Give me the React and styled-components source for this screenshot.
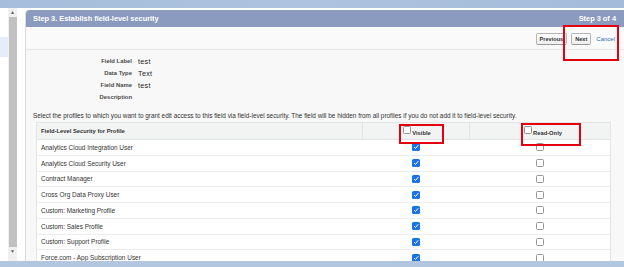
import React from "react";
import styled, { createGlobalStyle } from "styled-components";

const GlobalStyle = createGlobalStyle`
  html, body {
    margin: 0;
    padding: 0;
    background: #ffffff;
    font-family: "Liberation Sans", Arial, sans-serif;
    overflow: hidden;
  }
`;

const profiles = [
  "Analytics Cloud Integration User",
  "Analytics Cloud Security User",
  "Contract Manager",
  "Cross Org Data Proxy User",
  "Custom: Marketing Profile",
  "Custom: Sales Profile",
  "Custom: Support Profile",
  "Force.com - App Subscription User",
];

const fields = [
  ["Field Label", "test"],
  ["Data Type", "Text"],
  ["Field Name", "test"],
  ["Description", ""],
];

const StyledPage = styled.div`
  width: 624px;
  height: 267px;
  display: flex;
  flex-direction: column;
  overflow: hidden;
  position: relative;
`;

const StyledBanner = styled.div`
  height: 8px;
  flex-shrink: 0;
  background: linear-gradient(90deg, #a6bedb 0%, #adc3df 50%, #a4bcda 100%);
`;

const StyledMiddle = styled.div`
  flex: 1;
  display: flex;
  min-height: 0;
`;

const StyledSidebar = styled.div`
  width: 8px;
  flex-shrink: 0;
  padding-top: 29px;
  .active {
    height: 20px;
    background: #e5edf8;
  }
`;

const StyledScrollbar = styled.div`
  width: 9px;
  flex-shrink: 0;
  background: #f0f0f0;
  display: flex;
  flex-direction: column;
  align-items: center;
  .arrow {
    height: 9px;
    font-size: 5px;
    line-height: 9px;
    color: #606060;
  }
  .thumb {
    flex: 1;
    width: 8px;
    background: #c1c1c1;
  }
`;

const StyledPanel = styled.div`
  flex: 1;
  margin: 2px 0 0 8px;
  border-left: 1px solid #d9dcde;
  border-top-left-radius: 4px;
  background: #f8f8f8;
  display: flex;
  flex-direction: column;
  min-width: 0;
  overflow: hidden;
`;

const StyledHeader = styled.div`
  height: 17px;
  flex-shrink: 0;
  background: #8a9bbf;
  border-top-left-radius: 3px;
  display: flex;
  align-items: center;
  justify-content: space-between;
  padding: 0 8px 0 7px;
  color: #ffffff;
  font-weight: bold;
  font-size: 7.4px;
`;

const StyledButtonBar = styled.div`
  height: 22px;
  flex-shrink: 0;
  background: #fafafa;
  border-bottom: 1px solid #e6e6e6;
  display: flex;
  align-items: center;
  justify-content: flex-end;
  gap: 4px;
  padding-right: 9px;
`;

const StyledButton = styled.button`
  height: 12px;
  padding: 0 3px;
  font-family: "Liberation Sans", Arial, sans-serif;
  font-size: 5.6px;
  font-weight: bold;
  color: #333333;
  background: linear-gradient(#ffffff, #eeeeee);
  border: 1px solid #b5b5b5;
  border-bottom-color: #9a9a9a;
  border-radius: 2px;
  margin-top: 2px;
`;

const StyledLink = styled.span`
  font-size: 6px;
  color: #2b6fba;
  margin-left: 1px;
  margin-top: 2px;
`;

const StyledFieldList = styled.div`
  padding-top: 5px;
  display: flex;
  flex-direction: column;
`;

const StyledFieldRow = styled.div`
  height: 12px;
  display: flex;
  align-items: center;
  gap: 6px;
  .label {
    width: 106px;
    text-align: right;
    font-size: 5.9px;
    font-weight: bold;
    color: #4a4a4a;
  }
  .value {
    font-size: 7.2px;
    color: #222222;
    letter-spacing: 0.3px;
  }
`;

const StyledIntro = styled.div`
  margin-top: 7px;
  height: 12px;
  line-height: 12px;
  padding-left: 7px;
  font-size: 6.4px;
  color: #333333;
  white-space: nowrap;
`;

const StyledTable = styled.div`
  margin: 0 13px 0 10px;
  background: #ffffff;
  border: 1px solid #e3e5e6;
  border-bottom: none;
  display: grid;
  grid-template-columns: 325px 107px 1fr;
`;

const StyledHeadCell = styled.div`
  height: 17px;
  background: #f2f3f3;
  border-bottom: 1px solid #e0e3e5;
  border-left: ${(p) => (p.$first ? "none" : "1px solid #e0e3e5")};
  display: flex;
  align-items: center;
  justify-content: ${(p) => (p.$first ? "flex-start" : "center")};
  padding-left: ${(p) => (p.$first ? "4px" : "0")};
  font-size: 5.8px;
  font-weight: bold;
  color: #333333;
  box-sizing: border-box;
`;

const StyledCell = styled.div`
  height: 15.75px;
  border-bottom: 1px solid #ededed;
  box-sizing: border-box;
  display: flex;
  align-items: center;
  justify-content: ${(p) => (p.$first ? "flex-start" : "center")};
  padding-left: ${(p) => (p.$first ? "4px" : "0")};
  font-size: 6.45px;
  color: #333333;
`;

const StyledBox = styled.span`
  width: 8px;
  height: 8px;
  box-sizing: border-box;
  border-radius: 1.5px;
  display: inline-flex;
  align-items: center;
  justify-content: center;
  background: ${(p) => (p.$checked ? "#1a73e8" : "#ffffff")};
  border: ${(p) => (p.$checked ? "none" : "1px solid #959595")};
  margin-right: ${(p) => (p.$gap ? "1px" : "0")};
  margin-bottom: ${(p) => (p.$gap ? "2px" : "0")};
`;

const StyledHeadLabel = styled.span`
  display: inline-flex;
  align-items: flex-end;
  padding-left: ${(p) => p.$shift || "0"};
`;

const StyledMark = styled.div`
  position: absolute;
  border: 2px solid #e3000f;
  box-sizing: border-box;
  pointer-events: none;
`;

const StyledFooter = styled.div`
  height: 6px;
  flex-shrink: 0;
  background: #b3c6df;
`;

const Box = ({ checked, gap }) => (
  <StyledBox $checked={checked} $gap={gap}>
    {checked && (
      <svg width="6" height="6" viewBox="0 0 12 12">
        <path
          d="M2.5 6.5 L5 9 L10 3"
          fill="none"
          stroke="#ffffff"
          strokeWidth="2"
          strokeLinecap="round"
          strokeLinejoin="round"
        />
      </svg>
    )}
  </StyledBox>
);

export default function App() {
  return (
    <StyledPage>
      <GlobalStyle />
      <StyledBanner />
      <StyledMiddle>
        <StyledSidebar>
          <div className="active" />
        </StyledSidebar>
        <StyledScrollbar>
          <div className="arrow">▲</div>
          <div className="thumb" />
          <div className="arrow" style={{ height: "14px" }}>▼</div>
        </StyledScrollbar>
        <StyledPanel>
          <StyledHeader>
            <span>Step 3. Establish field-level security</span>
            <span>Step 3 of 4</span>
          </StyledHeader>
          <StyledButtonBar>
            <StyledButton>Previous</StyledButton>
            <StyledButton>Next</StyledButton>
            <StyledLink>Cancel</StyledLink>
          </StyledButtonBar>
          <StyledFieldList>
            {fields.map(([label, value]) => (
              <StyledFieldRow key={label}>
                <span className="label">{label}</span>
                <span className="value">{value}</span>
              </StyledFieldRow>
            ))}
          </StyledFieldList>
          <StyledIntro>
            Select the profiles to which you want to grant edit access to this field via
            field-level security. The field will be hidden from all profiles if you do not
            add it to field-level security.
          </StyledIntro>
          <StyledTable>
            <StyledHeadCell $first>Field-Level Security for Profile</StyledHeadCell>
            <StyledHeadCell>
              <StyledHeadLabel $shift="2px">
                <Box gap />
                Visible
              </StyledHeadLabel>
            </StyledHeadCell>
            <StyledHeadCell>
              <StyledHeadLabel $shift="6px">
                <Box gap />
                Read-Only
              </StyledHeadLabel>
            </StyledHeadCell>
            {profiles.map((name) => (
              <React.Fragment key={name}>
                <StyledCell $first>{name}</StyledCell>
                <StyledCell>
                  <Box checked />
                </StyledCell>
                <StyledCell>
                  <Box />
                </StyledCell>
              </React.Fragment>
            ))}
          </StyledTable>
        </StyledPanel>
      </StyledMiddle>
      <StyledFooter />
      <StyledMark style={{ left: 563, top: 25, width: 56, height: 36 }} />
      <StyledMark style={{ left: 399, top: 124, width: 45, height: 20 }} />
      <StyledMark style={{ left: 521, top: 123, width: 60, height: 23 }} />
    </StyledPage>
  );
}
